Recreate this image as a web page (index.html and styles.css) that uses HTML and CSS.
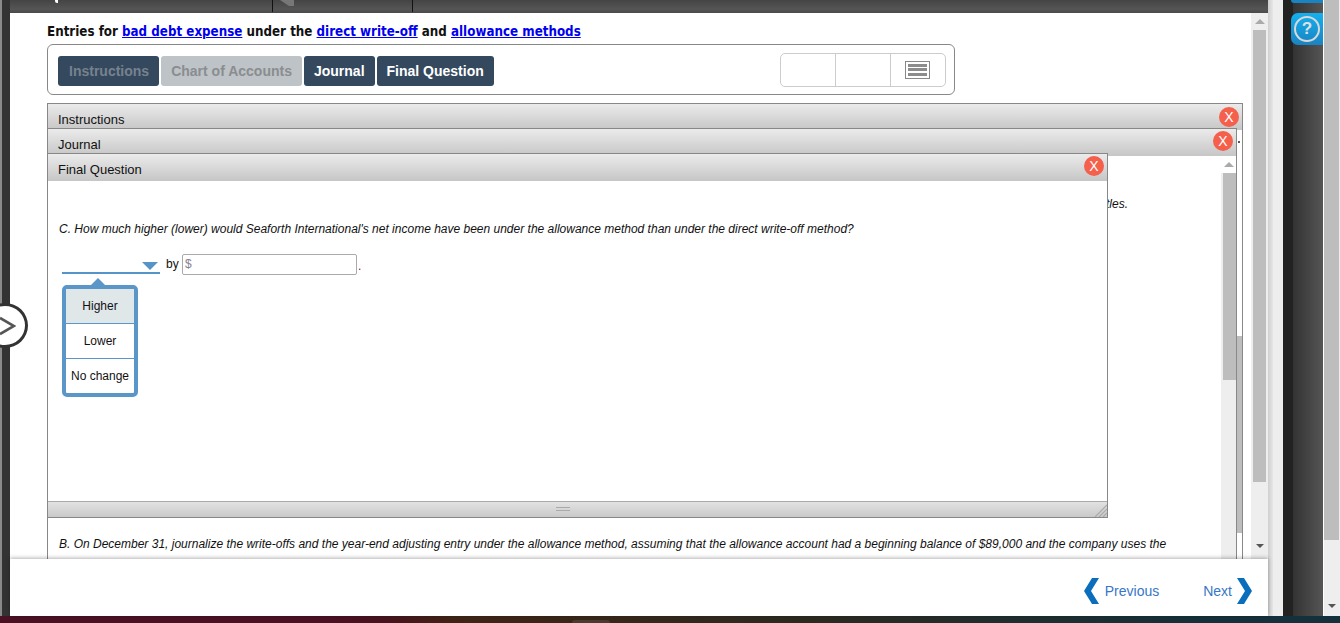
FILE: index.html
```html
<!DOCTYPE html>
<html lang="en">
<head>
<meta charset="utf-8">
<title>Entries for bad debt expense</title>
<link rel="stylesheet" href="styles.css">
</head>
<body>
<div class="shell">
  <div class="edge"></div>
  <div class="gutter">
    <button class="toggle" aria-label="Expand">
      <svg width="16" height="20" viewBox="0 0 16 20"><path d="M0 2 L14 10 L0 18" fill="none" stroke="#555" stroke-width="2.6"/></svg>
    </button>
  </div>
  <main class="main">
    <div class="topbar">
      <span class="brace"><i></i></span>
      <span class="cell">
        <svg width="16" height="6" viewBox="0 0 16 6"><path d="M0 0 H14 V6 H9 Z" fill="#777"/></svg>
      </span>
    </div>
    <div class="content">
      <div class="page">
        <h1 class="title">Entries for <a href="#">bad debt expense</a> under the <a href="#">direct write-off</a> and <a href="#">allowance methods</a></h1>
        <div class="toolbar">
          <div class="tabs">
            <span class="tab tab-muted">Instructions</span>
            <span class="tab tab-off">Chart of Accounts</span>
            <span class="tab">Journal</span>
            <span class="tab">Final Question</span>
          </div>
          <div class="views">
            <span class="view"></span>
            <span class="view"></span>
            <span class="view">
              <span class="list-icon"><i></i><i></i><i></i></span>
            </span>
          </div>
        </div>
        <div class="windows">
          <section class="win win-instructions">
            <header class="win-head">Instructions<span class="close">X</span></header>
            <div class="win-body">
              <div class="win-text"></div>
              <div class="mini-scroll">
                <span class="mini-tick"></span>
                <span class="mini-thumb"></span>
              </div>
            </div>
          </section>
          <section class="win win-journal">
            <header class="win-head">Journal<span class="close">X</span></header>
            <div class="win-body">
              <div class="win-text journal-text">
                <p class="note">Record the entries below and omit explanation titles.</p>
                <p class="task">B. On December 31, journalize the write-offs and the year-end adjusting entry under the allowance method, assuming that the allowance account had a beginning balance of $89,000 and the company uses the</p>
              </div>
              <div class="scroll scroll-journal">
                <span class="arrow-up"></span>
                <span class="thumb"></span>
              </div>
            </div>
          </section>
          <section class="win win-final">
            <header class="win-head">Final Question<span class="close">X</span></header>
            <div class="final-body">
              <p class="question">C. How much higher (lower) would Seaforth International's net income have been under the allowance method than under the direct write-off method?</p>
              <div class="answer">
                <div class="select">
                  <span class="select-arrow"></span>
                  <ul class="menu">
                    <li class="menu-on">Higher</li>
                    <li>Lower</li>
                    <li>No change</li>
                  </ul>
                </div>
                <span class="by">by</span>
                <div class="money"><span>$</span></div>
                <span class="dot">.</span>
              </div>
            </div>
            <div class="resize-bar">
              <span class="grip"></span>
              <svg class="corner" width="13" height="13" viewBox="0 0 13 13"><path d="M13 1 L1 13 M13 5 L5 13 M13 9 L9 13" stroke="#aaa" stroke-width="1.2"/></svg>
            </div>
          </section>
        </div>
      </div>
      <div class="scroll scroll-page">
        <span class="arrow-up"></span>
        <span class="thumb"></span>
        <span class="arrow-down"></span>
      </div>
    </div>
    <footer class="footer">
      <a class="nav" href="#">
        <svg width="15" height="26" viewBox="0 0 15 26"><path d="M8 0 H15 L7 13 L15 26 H8 L0 13 Z" fill="#0a6ebd"/></svg>
        <span>Previous</span>
      </a>
      <a class="nav nav-next" href="#">
        <span>Next</span>
        <svg width="15" height="26" viewBox="0 0 15 26"><path d="M7 0 H0 L8 13 L0 26 H7 L15 13 Z" fill="#0a6ebd"/></svg>
      </a>
    </footer>
  </main>
  <div class="shade"></div>
  <div class="light"></div>
  <div class="black"></div>
  <aside class="rail">
    <span class="rail-stub"></span>
    <button class="help" aria-label="Help"><span>?</span></button>
  </aside>
  <div class="outer-scroll">
    <span class="outer-thumb"></span>
    <span class="arrow-down"></span>
  </div>
</div>
<div class="taskbar"><span class="pill"></span></div>
</body>
</html>
```
FILE: styles.css
```css
* { box-sizing: border-box; }
html, body { margin: 0; padding: 0; }
body {
  width: 1340px;
  height: 623px;
  overflow: hidden;
  background: #333;
  font-family: "Liberation Sans", Arial, sans-serif;
  font-size: 12px;
  color: #111;
}
.shell { display: flex; height: 616px; }
.edge { width: 2px; background: #8a8a8a; }
.gutter { width: 8px; background: #333; position: relative; }
.toggle {
  position: absolute;
  left: -20px;
  top: 303px;
  width: 46px;
  height: 45px;
  padding: 0 0 0 6px;
  border: 3px solid #333;
  border-radius: 50%;
  background: #fff;
  display: flex;
  align-items: center;
  justify-content: center;
  z-index: 20;
}
.main { width: 1258px; display: flex; flex-direction: column; background: #fff; }
.topbar {
  height: 13px;
  background: linear-gradient(#444, #555 70%, #4a4a4a);
  display: flex;
  overflow: hidden;
}
.brace { width: 262px; padding-left: 45px; }
.brace i { display: block; width: 3px; height: 3px; background: #fff; border-radius: 0 0 0 2px; }
.cell {
  width: 141px;
  height: 12px;
  border-left: 1px solid #111;
  border-right: 1px solid #111;
  padding-left: 7px;
  display: flex;
}
.content { flex: 1; min-height: 0; display: flex; overflow: hidden; }
.page { width: 1241px; padding-left: 37px; display: flex; flex-direction: column; }
.title {
  margin: 10px 0 4px;
  font-family: "DejaVu Sans", Verdana, sans-serif;
  font-stretch: condensed;
  font-size: 13.25px;
  line-height: 17px;
  font-weight: bold;
  color: #111;
  white-space: nowrap;
}
.title a { color: #0000ee; }
.toolbar {
  width: 908px;
  height: 51px;
  border: 1px solid #888;
  border-radius: 6px;
  padding: 0 8px 0 10px;
  display: flex;
  justify-content: space-between;
  align-items: center;
  flex: none;
}
.tabs { display: flex; gap: 2px; margin-top: 2px; }
.tab {
  height: 30px;
  padding: 0 10px;
  background: #34495e;
  color: #fff;
  border-radius: 3px;
  font-size: 14px;
  font-weight: bold;
  line-height: 30px;
}
.tabs .tab-muted { color: #77828e; padding: 0 10px 0 11px; }
.tabs .tab-off { background: #bdc3c7; color: #8a8d8f; }
.views {
  width: 166px;
  height: 34px;
  border: 1px solid #ccc;
  border-radius: 5px;
  display: flex;
}
.view {
  flex: 1;
  border-left: 1px solid #ccc;
  display: flex;
  align-items: center;
  justify-content: center;
}
.view:first-child { border-left: 0; }
.list-icon {
  width: 25px;
  height: 18px;
  margin-left: -2px;
  border: 1px solid #888;
  padding: 2px;
  display: flex;
  flex-direction: column;
  justify-content: space-between;
}
.list-icon i { display: block; height: 3px; background: #8c8c8c; }
.windows { position: relative; flex: 1; margin-top: 8px; }
.win {
  position: absolute;
  left: 0;
  border: 1px solid #888;
  background: #fff;
  display: flex;
  flex-direction: column;
}
.win-instructions { top: 0; width: 1196px; height: 600px; }
.win-journal { top: 25px; width: 1190px; height: 600px; }
.win-final { top: 50px; width: 1061px; height: 365px; }
.win-head {
  height: 26px;
  flex: none;
  padding: 7px 10px 0;
  position: relative;
  background: linear-gradient(#ebebeb, #c6c6c6);
  font-size: 13px;
  line-height: 18px;
  color: #111;
}
.win-journal .win-head, .win-final .win-head { height: 27px; }
.close {
  position: absolute;
  right: 3px;
  top: 3px;
  width: 20px;
  height: 20px;
  border-radius: 50%;
  background: #f4604c;
  color: #fff;
  font-size: 14px;
  line-height: 20px;
  text-align: center;
}
.win-journal .close { top: 2px; right: 3px; }
.win-final .close { top: 2px; right: 3px; }
.win-body { flex: 1; display: flex; min-height: 0; }
.win-text { flex: 1; }
.mini-scroll { width: 5px; padding-top: 206px; position: relative; }
.mini-tick { position: absolute; left: 1px; top: 11px; width: 2px; height: 2px; background: #555; }
.mini-thumb { display: block; height: 197px; background: #bdbdbd; }
.journal-text { padding: 0 93px 0 11px; font-style: italic; }
.note { margin: 39px 0 0; line-height: 18px; text-align: right; white-space: nowrap; }
.task { margin: 322px -80px 0 0; line-height: 18px; white-space: nowrap; }
.scroll { display: flex; flex-direction: column; align-items: center; background: #eee; flex: none; }
.scroll-journal { width: 15px; padding-left: 2px; }
.scroll-journal .arrow-up { background: #fff; margin-left: -2px; width: 15px; height: 17px; }
.scroll-journal .thumb { display: block; width: 13px; height: 207px; background: #bdbdbd; }
.arrow-up { display: block; height: 17px; position: relative; width: 100%; }
.arrow-up::before {
  content: "";
  position: absolute;
  left: 50%;
  top: 6px;
  margin-left: -5px;
  border: 5px solid transparent;
  border-top: 0;
  border-bottom: 5px solid #aaa;
}
.arrow-down {
  display: block;
  width: 0;
  height: 0;
  border: 4px solid transparent;
  border-bottom: 0;
  border-top: 4px solid #555;
}
.scroll-page { width: 17px; background: #eee; position: relative; }
.scroll-page .thumb { display: block; width: 13px; height: 452px; background: #bdbdbd; }
.scroll-page .arrow-down { position: absolute; left: 5px; top: 531px; }
.final-body { flex: 1; padding: 39px 0 0 11px; }
.question { margin: 0; line-height: 18px; font-style: italic; white-space: nowrap; }
.answer { display: flex; margin: 16px 0 0 3px; height: 21px; }
.select { width: 98px; height: 20px; border-bottom: 2px solid #5594c8; position: relative; }
.select-arrow {
  position: absolute;
  right: 2px;
  top: 8px;
  border: 8px solid transparent;
  border-bottom: 0;
  border-top: 8px solid #5594c8;
}
.menu {
  list-style: none;
  margin: 0;
  padding: 0;
  position: absolute;
  left: 0;
  top: 31px;
  width: 76px;
  height: 112px;
  border: 4px solid #5a96c8;
  border-radius: 5px;
  background: #fff;
  text-align: center;
  z-index: 10;
}
.menu::before {
  content: "";
  position: absolute;
  left: 25px;
  top: -11px;
  border: 7px solid transparent;
  border-top: 0;
  border-bottom: 7px solid #5a96c8;
}
.menu li { height: 35px; line-height: 34px; border-top: 1px solid #5a96c8; }
.menu li:first-child { height: 34px; border-top: 0; }
.menu .menu-on { background: #dfe7e9; }
.by { margin-left: 6px; line-height: 21px; width: 16px; }
.money {
  width: 175px;
  height: 21px;
  border: 1px solid #aaa;
  border-radius: 2px;
  padding-left: 2px;
  line-height: 19px;
  color: #8a7f90;
}
.dot { color: #8a1030; line-height: 25px; margin-left: 1px; }
.resize-bar {
  height: 16px;
  flex: none;
  border-top: 1px solid #aaa;
  background: linear-gradient(#e2e2e2, #c9c9c9);
  position: relative;
  display: flex;
  justify-content: center;
  padding: 5px 30px 0 0;
}
.grip { width: 14px; height: 4px; border-top: 1px solid #aaa; border-bottom: 1px solid #aaa; }
.corner { position: absolute; right: 0; bottom: 0; }
.footer {
  height: 57px;
  flex: none;
  background: #fff;
  display: flex;
  justify-content: flex-end;
  align-items: center;
  gap: 44px;
  padding: 6px 16px 0 0;
  position: relative;
  z-index: 6;
  box-shadow: 0 -1px 4px rgba(0, 0, 0, .3);
}
.nav {
  display: flex;
  align-items: center;
  gap: 6px;
  color: #3876c8;
  font-size: 14px;
  text-decoration: none;
}
.nav-next { gap: 5px; }
.shade { width: 5px; background: linear-gradient(90deg, #cfcfcf, #e6e6e6); }
.light { width: 10px; background: #eee; }
.black { width: 10px; background: #222; }
.rail {
  width: 30px;
  background: linear-gradient(90deg, #333, #555);
  display: flex;
  flex-direction: column;
  align-items: flex-end;
}
.rail-stub {
  display: block;
  width: 32px;
  height: 3px;
  flex: none;
  background: #1a83c2;
  border-radius: 0 0 0 6px;
}
.help {
  margin-top: 10px;
  width: 32px;
  height: 32px;
  flex: none;
  padding: 0;
  border: 0;
  border-radius: 7px 0 0 7px;
  background: linear-gradient(#14b0ee, #1a83c2);
  display: flex;
  align-items: center;
  justify-content: center;
}
.help span {
  width: 26px;
  height: 26px;
  border: 2.5px solid #d8d8d8;
  border-radius: 50%;
  color: #e0e0e0;
  font: bold 17px/21px "Liberation Sans", Arial, sans-serif;
  text-align: center;
}
.outer-scroll {
  width: 17px;
  background: #eee;
  border-left: 1px solid #fff;
  position: relative;
}
.outer-thumb { display: block; width: 15px; height: 540px; background: #bdbdbd; }
.outer-scroll .arrow-down { position: absolute; left: 4px; top: 604px; }
.taskbar {
  height: 7px;
  background: linear-gradient(90deg, #4a1024 0, #4a1024 25%, #45141d 29%, #3f2415 34%, #2b2a20 60%, #14303a 90%, #14303a 100%);
  padding: 4px 0 0 572px;
}
.pill { display: block; width: 38px; height: 3px; background: #4a3a30; border-radius: 3px 3px 0 0; }
```
